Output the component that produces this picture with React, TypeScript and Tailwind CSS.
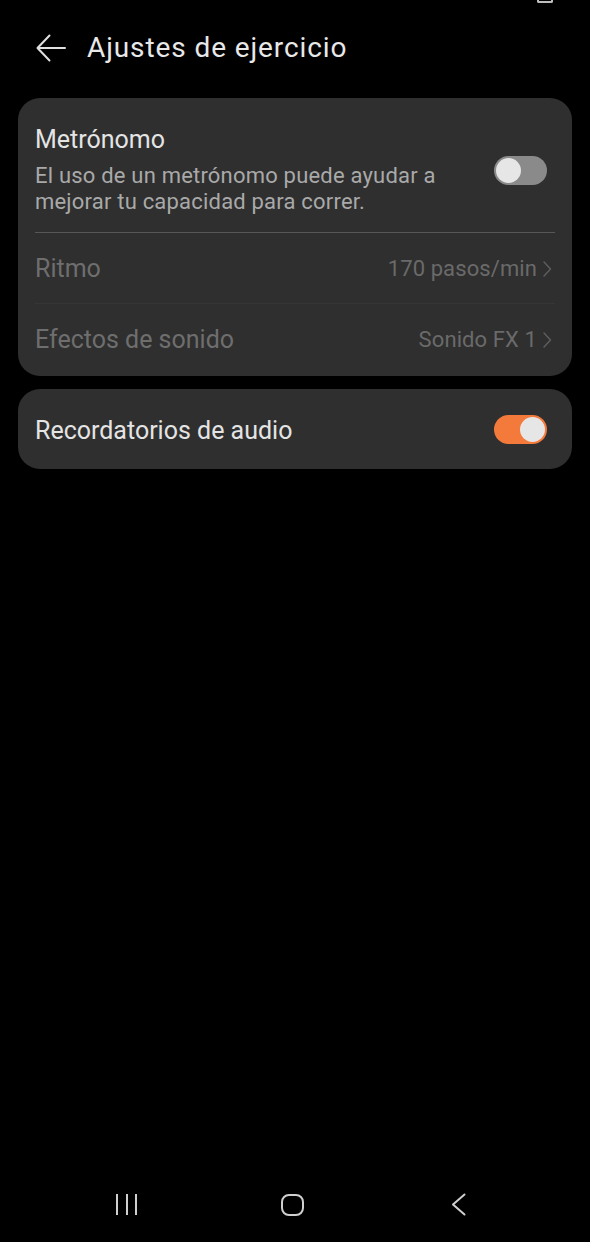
import React from "react";

function Toggle({ on }: { on: boolean }) {
  return (
    <div
      className={
        on
          ? "w-[53px] h-[29px] rounded-full bg-[#f47a3c] flex items-center justify-end px-[2px] shrink-0"
          : "w-[53px] h-[29px] rounded-full bg-[#8a8a8a] flex items-center justify-start px-[2px] shrink-0"
      }
    >
      <div className="w-[25px] h-[25px] rounded-full bg-[#e6e6e6]" />
    </div>
  );
}

function Chevron() {
  return (
    <svg width="10" height="18" viewBox="0 0 10 18" fill="none" className="shrink-0">
      <path d="M2 2 L8.5 9 L2 16" stroke="#5e5e5e" strokeWidth="1.4" strokeLinecap="round" strokeLinejoin="round" />
    </svg>
  );
}

function ValueRow({ label, value }: { label: string; value: string }) {
  return (
    <div className="h-[70px] flex items-center justify-between pl-[17px] pr-[20px] pt-[2px]">
      <span className="text-[25px] leading-[28px] text-[#6e6e6e]">{label}</span>
      <div className="flex items-center gap-[5px]">
        <span className="text-[22px] leading-[28px] tracking-[0.1px] text-[#6a6a6a]">{value}</span>
        <Chevron />
      </div>
    </div>
  );
}

export default function App() {
  return (
    <div
      className="w-[590px] h-[1242px] bg-black flex flex-col"
      style={{ fontFamily: "Roboto, 'Noto Sans', sans-serif" }}
    >
      {/* status bar remnant */}
      <div className="h-[4px] flex justify-end pr-[37px]">
        <div className="w-[16px] h-[3px] border-x-2 border-b-2 border-[#bdbdbd] rounded-b-[2px]" />
      </div>

      {/* header */}
      <div className="h-[88px] flex items-center pl-[36px]">
        <svg width="30" height="28" viewBox="0 0 30 28" fill="none" className="shrink-0">
          <path d="M29 14 H2" stroke="#e0e0e0" strokeWidth="2" strokeLinecap="round" />
          <path d="M13.5 1.5 L1.5 14 L13.5 26.5" stroke="#e0e0e0" strokeWidth="2" strokeLinecap="round" strokeLinejoin="round" />
        </svg>
        <h1 className="ml-[21px] text-[28px] leading-[34px] tracking-[0.9px] text-[#e8e8e8] font-normal">
          Ajustes de ejercicio
        </h1>
      </div>

      {/* card 1 */}
      <div className="mx-[18px] mt-[6px] rounded-[22px] bg-[#2f2f2f] pb-[2px]">
        <div className="flex items-center pt-[27px] pl-[17px] pr-[25px] pb-[17px]">
          <div className="flex-1 pr-[20px]">
            <div className="text-[25px] leading-[30px] text-[#e4e4e4]">Metrónomo</div>
            <div className="mt-[8px] text-[22px] leading-[26px] tracking-[0.2px] text-[#a9a9a9]">
              El uso de un metrónomo puede ayudar a mejorar tu capacidad para correr.
            </div>
          </div>
          <Toggle on={false} />
        </div>
        <div className="mx-[17px] h-px bg-[#575757]" />
        <ValueRow label="Ritmo" value="170 pasos/min" />
        <div className="mx-[17px] h-px bg-[#363636]" />
        <ValueRow label="Efectos de sonido" value="Sonido FX 1" />
      </div>

      {/* card 2 */}
      <div className="mx-[18px] mt-[13px] h-[80px] rounded-[22px] bg-[#2f2f2f] flex items-center justify-between pl-[17px] pr-[25px]">
        <span className="text-[25px] leading-[28px] pt-[3px] text-[#e4e4e4]">Recordatorios de audio</span>
        <Toggle on={true} />
      </div>

      <div className="flex-1" />

      {/* nav bar */}
      <div className="h-[74px] flex items-center pl-[115px] pb-[1px]">
        <div className="w-[23px] h-[21px] flex justify-between px-[1px] mr-[143px]">
          <div className="w-[2px] h-full bg-[#cfcfcf]" />
          <div className="w-[2px] h-full bg-[#cfcfcf]" />
          <div className="w-[2px] h-full bg-[#cfcfcf]" />
        </div>
        <div className="w-[23px] h-[22px] rounded-[8px] border-2 border-[#cfcfcf] mr-[147px]" />
        <svg width="15" height="23" viewBox="0 0 15 23" fill="none">
          <path d="M13.5 1.5 L2 11.5 L13.5 21.5" stroke="#cfcfcf" strokeWidth="2" strokeLinecap="round" strokeLinejoin="round" />
        </svg>
      </div>
    </div>
  );
}
